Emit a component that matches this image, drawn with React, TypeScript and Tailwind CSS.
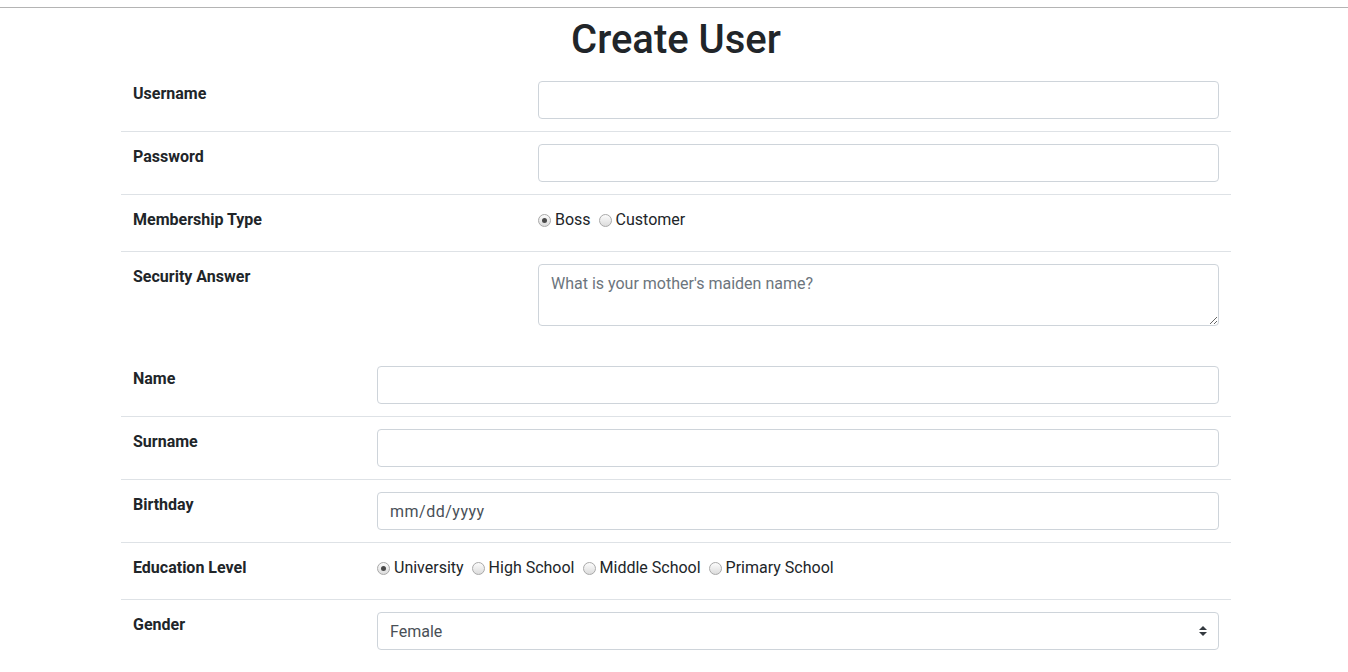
import React from 'react';

const inputCls =
  'block w-full h-[38px] rounded-[4px] border border-[#ced4da] bg-white px-3 pt-[7px] pb-[5px] text-base leading-6 text-[#495057] outline-none';

const Radio: React.FC<{ label: string; checked?: boolean }> = ({ label, checked }) => (
  <label className="mr-[8px] flex items-center">
    <span className="mr-[4px] flex h-[13px] w-[13px] items-center justify-center rounded-full border border-[#a9a9a9] bg-gradient-to-b from-[#fcfcfc] to-[#dcdcdc]">
      {checked && <span className="h-[5px] w-[5px] rounded-full bg-[#4a4a4a]" />}
    </span>
    <span>{label}</span>
  </label>
);

const Row: React.FC<{ label: string; labelWidth: string; children: React.ReactNode; radio?: boolean }> = ({
  label,
  labelWidth,
  children,
  radio,
}) => (
  <div className="flex">
    <div className={`${labelWidth} shrink-0 px-3 pt-[13px] font-bold leading-6`}>{label}</div>
    <div className={`flex-1 px-3 ${radio ? 'pt-[13px] pb-[19px]' : 'pt-3 pb-3'}`}>{children}</div>
  </div>
);

export default function App() {
  return (
    <div
      className="h-screen overflow-hidden bg-white text-base leading-6 text-[#212529]"
      style={{ fontFamily: 'Roboto, "Liberation Sans", sans-serif' }}
    >
      <div className="h-[7px]" />
      <div className="h-px bg-[#b4b4b4]" />
      <div className="ml-[121px] w-[1110px]">
        <h1 className="mt-[8px] mb-[5px] text-center text-[40px] font-medium leading-[48px]">Create User</h1>

        {/* account */}
        <div className="mb-4 divide-y divide-[#dee2e6]">
          <Row label="Username" labelWidth="w-[405px]">
            <input type="text" className={inputCls} />
          </Row>
          <Row label="Password" labelWidth="w-[405px]">
            <input type="password" className={inputCls} />
          </Row>
          <Row label="Membership Type" labelWidth="w-[405px]" radio>
            <div className="flex">
              <Radio label="Boss" checked />
              <Radio label="Customer" />
            </div>
          </Row>
          <Row label="Security Answer" labelWidth="w-[405px]">
            <textarea
              rows={2}
              placeholder="What is your mother's maiden name?"
              className="block h-[62px] w-full rounded-[4px] border border-[#ced4da] px-3 pt-[7px] pb-[5px] text-base leading-6 text-[#495057] outline-none placeholder:text-[#6c757d]"
            />
          </Row>
        </div>

        {/* personal */}
        <div className="divide-y divide-[#dee2e6]">
          <Row label="Name" labelWidth="w-[244px]">
            <input type="text" className={inputCls} />
          </Row>
          <Row label="Surname" labelWidth="w-[244px]">
            <input type="text" className={inputCls} />
          </Row>
          <Row label="Birthday" labelWidth="w-[244px]">
            <div className={`${inputCls} tracking-[0.5px]`}>mm/dd/yyyy</div>
          </Row>
          <Row label="Education Level" labelWidth="w-[244px]" radio>
            <div className="flex">
              <Radio label="University" checked />
              <Radio label="High School" />
              <Radio label="Middle School" />
              <Radio label="Primary School" />
            </div>
          </Row>
          <Row label="Gender" labelWidth="w-[244px]">
            <div className="relative">
              <select defaultValue="Female" className={`${inputCls} appearance-none pr-8`}>
                <option>Female</option>
                <option>Male</option>
              </select>
              <svg
                className="pointer-events-none absolute right-3 top-[14px]"
                width="8"
                height="10"
                viewBox="0 0 4 5"
              >
                <path fill="#343a40" d="M2 0L0 2h4zm0 5L0 3h4z" />
              </svg>
            </div>
          </Row>
        </div>
      </div>
    </div>
  );
}
